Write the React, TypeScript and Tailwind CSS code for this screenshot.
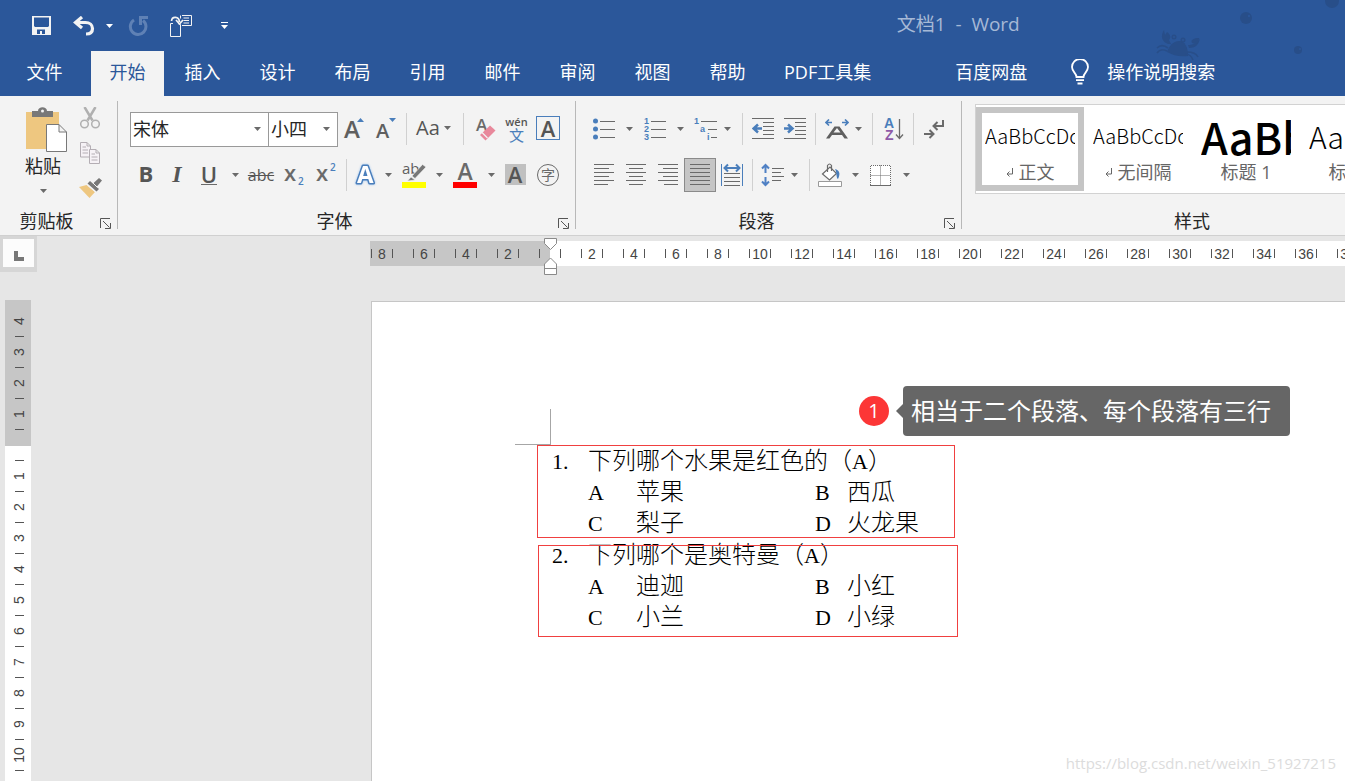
import type { ReactNode } from "react";

const GREY = "#6a6a6a";
const BLUE = "#4a7ebb";

function Caret({ className = "fill-[#6a6a6a]" }: { className?: string }) {
  return (
    <svg width="7" height="4" viewBox="0 0 7 4" className={className} aria-hidden="true">
      <path d="M0 0h7L3.5 4z" />
    </svg>
  );
}

function Tool({ label, className, children }: { label: string; className: string; children: ReactNode }) {
  return (
    <button
      type="button"
      aria-label={label}
      className={`flex h-[34px] shrink-0 items-center justify-center text-[#555555] ${className}`}
    >
      {children}
    </button>
  );
}

function Drop({ label, className }: { label: string; className: string }) {
  return (
    <Tool label={label} className={className}>
      <Caret />
    </Tool>
  );
}

function Divider({ className }: { className: string }) {
  return (
    <div className={`flex h-8 shrink-0 justify-center ${className}`}>
      <div className="w-px bg-[#d0d0d0]" />
    </div>
  );
}

function Group({ name, launcher = true, className, children }: { name: string; launcher?: boolean; className: string; children: ReactNode }) {
  return (
    <section aria-label={name} className={`flex shrink-0 flex-col ${className}`}>
      <div className="h-[111px]">{children}</div>
      <div className="flex h-7 items-center">
        <h2 className="flex-1 text-center text-lg leading-6 text-[#262626]">{name}</h2>
        {launcher && (
          <button type="button" aria-label={`${name} 设置`} className="flex w-6 justify-center pt-1">
            <svg width="11" height="11" viewBox="0 0 11 11" fill="none" stroke="#555" aria-hidden="true">
              <path d="M.5 10V.5H10M3 3l6.5 6.5M10.5 5v5.500H5" />
            </svg>
          </button>
        )}
      </div>
    </section>
  );
}

function GroupLine() {
  return <div className="mt-[5px] h-32 w-px shrink-0 bg-[#b8b8b8]" />;
}

function Lines({ rows }: { rows: [number, number][] }) {
  return (
    <svg width="22" height="22" viewBox="0 0 22 22" stroke={GREY} fill="none" aria-hidden="true">
      {rows.map(([a, b], i) => (
        <path key={i} d={`M${a} ${i * 4 + 0.5}H${b}`} />
      ))}
    </svg>
  );
}

function Crab() {
  return (
    <svg className="pointer-events-none absolute right-0 top-0" width="200" height="70" viewBox="0 0 200 70" fill="#284e89" aria-hidden="true">
      <circle cx="101" cy="18" r="6" />
      <circle cx="153" cy="50" r="4" />
      <circle cx="187" cy="1" r="7" />
      <circle cx="104" cy="16" r="1.200" fill="#2b579a" />
      <circle cx="155" cy="49" r="1" fill="#2b579a" />
      <path d="M22 52c2-6 6-11 12-11s9 6 9 15c-8 1-15-.5-21-4z" />
      <path d="M23 44c-6-2-8-8-4-14l1 5 2-3c4 3 4 6 2 8l2 4zM43 45c5 0 10-2 12-7-1 7-5 10-11 10z" />
      <path d="M47 43c-2-3 2-5 7-5 0 5-3 7-7 5z" />
      <circle cx="29" cy="37" r="2.500" />
      <circle cx="38" cy="40" r="2.500" />
      <path d="M23 48c-4-3-8-3-11 0M22 51c-4-2-8-1-10 2M42 52c5 0 9 1 11 5M40 54c4 0 7 3 8 6" fill="none" stroke="#284e89" strokeWidth="1.600" />
      <circle cx="29" cy="37" r="1" fill="#2b579a" />
      <circle cx="38" cy="40" r="1" fill="#2b579a" />
    </svg>
  );
}

function TitleBar() {
  return (
    <div className="grid h-[51px] grid-cols-[2fr_1fr] items-center">
      <div className="flex items-center pl-6">
        <button type="button" aria-label="保存" className="flex w-[34px] justify-center">
          <svg width="19" height="19" viewBox="0 0 19 19" aria-hidden="true">
            <path fill="#f3f3f3" fillRule="evenodd" d="M0 0h19v19H0zM2 1.500v8.500l1 1h13l1-1V1.500zM5 13.500v4.500h3V15h2v3h3v-4.500z" />
          </svg>
        </button>
        <button type="button" aria-label="撤消" className="ml-2 flex w-9 justify-center">
          <svg width="22" height="20" viewBox="0 0 22 20" fill="none" stroke="#f3f3f3" strokeWidth="3.200" aria-hidden="true">
            <path d="M9 1 2.500 6.500 9 12" />
            <path d="M3 6.500h9.500c4 0 7 2.500 7 6s-2.500 5.500-6.500 5.500" />
          </svg>
        </button>
        <button type="button" aria-label="撤消列表" className="flex w-3.5 justify-center">
          <Caret className="fill-white" />
        </button>
        <button type="button" aria-label="重复" className="ml-2 flex w-7 justify-center">
          <svg width="20" height="20" viewBox="0 0 20 20" fill="none" stroke="#5f81b5" strokeWidth="3" aria-hidden="true">
            <path d="M6 4A7.800 7.800 0 1 0 15 4.500" />
            <path d="M20 1.500h-7.500V9" />
          </svg>
        </button>
        <button type="button" aria-label="触摸模式" className="ml-3 flex w-[34px] justify-center">
          <svg width="22" height="22" viewBox="0 0 22 22" fill="none" stroke="#f3f3f3" aria-hidden="true">
            <path d="M3 8.500H.5v13h10v-12L8 8.500M12 .5h9.500v10H12M10.500.5v3M13.500 3H19M13.500 5.500H19M13.500 8H19" />
            <path d="M1.500 6C2 1 9 1 9.500 7M6 5l3.500 4L13 5" strokeWidth="1.700" />
          </svg>
        </button>
        <button type="button" aria-label="自定义快速访问工具栏" className="ml-3 flex w-7 flex-col items-center gap-0.5">
          <span className="h-px w-[7px] bg-white" />
          <Caret className="fill-white" />
        </button>
      </div>
      <h1 className="-mt-1 whitespace-pre text-[19px] leading-6 text-[#a6b9d6]">文档1  -  Word</h1>
    </div>
  );
}

const TABS = ["开始", "插入", "设计", "布局", "引用", "邮件", "审阅", "视图", "帮助"];

function TabBar() {
  return (
    <nav className="flex h-[45px] gap-0.5 whitespace-nowrap text-lg text-white">
      <button type="button" className="w-[89px] shrink-0 pb-1">文件</button>
      {TABS.map((t, i) => (
        <button key={t} type="button" className={`w-[73px] shrink-0 pb-1 ${i === 0 ? "bg-[#f3f3f3] text-[#2b579a]" : ""}`}>
          {t}
        </button>
      ))}
      <button type="button" className="shrink-0 px-[18px] pb-1">PDF工具集</button>
      <button type="button" className="ml-[46px] shrink-0 px-[18px] pb-1">百度网盘</button>
      <button type="button" className="ml-6 flex shrink-0 items-center gap-[18px] pb-1">
        <svg width="18" height="26" viewBox="0 0 18 26" fill="none" stroke="#fff" strokeWidth="1.800" aria-hidden="true">
          <path d="M5.500 18c0-4-4.500-5-4.500-10a8 8 0 0 1 16 0c0 5-4.500 6-4.500 10zM5 21.200h8M6.500 24.500h5" />
        </svg>
        操作说明搜索
      </button>
    </nav>
  );
}

function ClipboardGroup() {
  return (
    <Group name="剪贴板" className="w-[117px]">
      <div className="flex pl-3">
        <button type="button" className="flex w-[62px] flex-col items-center pt-[11px]">
          <svg width="48" height="46" viewBox="0 0 48 46" aria-hidden="true">
            <path fill="#eec780" d="M7 5h33v37H7z" />
            <path fill="#787878" d="M13 10V4h6c0-5 9-5 9 0h6v6z" />
            <circle cx="23.500" cy="4" r="1.500" fill="#f3f3f3" />
            <path fill="#fff" stroke="#787878" d="M27.500 17.500H40l7.500 7.500v19.500h-20zM40 17.500V25h7.500" />
          </svg>
          <span className="text-lg leading-[26px] text-[#262626]">粘贴</span>
          <span className="pt-[10px]"><Caret /></span>
        </button>
        <div className="flex w-8 flex-col pt-1">
          <button type="button" aria-label="剪切" className="flex h-[35px] items-center justify-center">
            <svg width="20" height="22" viewBox="0 0 20 22" fill="none" stroke="#b0b0b0" aria-hidden="true">
              <path d="M4.500 0l8 13.500M15.500 0l-8 13.500" strokeWidth="2.500" />
              <circle cx="4.500" cy="17" r="3.800" strokeWidth="1.500" />
              <circle cx="15.500" cy="17" r="3.800" strokeWidth="1.500" />
            </svg>
          </button>
          <button type="button" aria-label="复制" className="flex h-[35px] items-center justify-center">
            <svg width="20" height="22" viewBox="0 0 20 22" fill="#f6f2f6" stroke="#b4aeb4" aria-hidden="true">
              <path d="M.5.5H7L10.500 4v11H.5zM7 .5V4h3.500M2.500 5H6M2.500 8H8M2.500 11H8" />
              <path d="M9.500 7.500H16l3.500 3.500v10.500h-10zM16 7.500V11h3.500M11.500 12H15M11.500 15H17.500M11.500 18H17.500" />
            </svg>
          </button>
          <button type="button" aria-label="格式刷" className="flex h-[35px] items-center justify-center">
            <svg width="23" height="20" viewBox="0 0 23 20" aria-hidden="true">
              <path fill="#eec780" d="M0 9l7.500-2L16 14l-5.500 6z" />
              <path fill="#787878" d="M8.500 5.500L11 3l9 8-2.500 2.500zM14 5.500L20 0l3 2.500L17.500 9z" />
              <path stroke="#f3f3f3" d="M9 7.500l8 7M14 5l4.500 4.500" />
            </svg>
          </button>
        </div>
      </div>
    </Group>
  );
}

function Picker({ label, value, options, className }: { label: string; value: string; options: string[]; className: string }) {
  return (
    <label className={`relative flex h-[35px] shrink-0 items-center border border-[#999999] bg-white ${className}`}>
      <select aria-label={label} defaultValue={value} className="h-full w-full appearance-none bg-transparent pl-0.5 text-lg text-[#262626]">
        {options.map((o) => (
          <option key={o}>{o}</option>
        ))}
      </select>
      <span className="pointer-events-none absolute right-[7px]"><Caret /></span>
    </label>
  );
}

function FontGroup() {
  return (
    <Group name="字体" className="w-[457px]">
      <div className="pl-3 pt-[10px]">
        <div className="flex h-[46px] items-center">
          <Picker label="字体名称" value="宋体" options={["宋体", "黑体", "楷体"]} className="w-[139px]" />
          <Picker label="字号" value="小四" options={["小四", "四号", "五号"]} className="-ml-px w-[70px]" />
          <Tool label="增大字号" className="w-8">
            <svg className="overflow-visible" width="20" height="24" viewBox="0 0 20 24" aria-hidden="true">
              <text x="0" y="21" fontSize="24" fontWeight="600" fill="#5f5f5f">A</text>
              <path d="M13 5l3.500-4L20 5z" fill={BLUE} />
            </svg>
          </Tool>
          <Tool label="减小字号" className="w-8">
            <svg className="overflow-visible" width="20" height="24" viewBox="0 0 20 24" aria-hidden="true">
              <text x="0" y="21" fontSize="20" fontWeight="600" fill="#5f5f5f">A</text>
              <path d="M13 1l3.500 4L20 1z" fill={BLUE} />
            </svg>
          </Tool>
          <Divider className="w-[9px]" />
          <Tool label="更改大小写" className="w-[45px] gap-1 pb-0.5 text-xl">
            <span>Aa</span>
            <Caret />
          </Tool>
          <Divider className="w-3.5" />
          <Tool label="清除格式" className="w-[31px]">
            <svg className="overflow-visible" width="20" height="24" viewBox="0 0 20 24" aria-hidden="true">
              <text x="0" y="14" fontSize="17" fontWeight="600" fill={GREY}>A</text>
              <path d="M4 18L14 8.500l5.500 5L9.500 23.500z" fill="#e8889b" />
              <path d="M6 15.500l5.500 5.500" stroke="#f3f3f3" strokeWidth="1.200" />
            </svg>
          </Tool>
          <Tool label="拼音指南" className="w-[31px] flex-col">
            <span className="text-[11px] font-semibold leading-[11px]">wén</span>
            <span className="text-[15px] leading-4 text-[#4a7ebb]">文</span>
          </Tool>
          <Tool label="字符边框" className="w-8 pb-0.5">
            <span className="flex size-6 items-center justify-center border border-[#4a7ebb] text-[22px] font-semibold leading-5">A</span>
          </Tool>
        </div>
        <div className="flex h-[46px] items-center">
          <Tool label="加粗" className="w-8 pb-1 text-[22px] font-bold">B</Tool>
          <Tool label="倾斜" className="w-[30px] pb-0.5 font-['Liberation_Serif',serif] text-2xl font-bold italic">I</Tool>
          <Tool label="下划线" className="w-[34px] pb-0.5">
            <span className="border-b border-[#6a6a6a] text-[22px] font-semibold leading-5">U</span>
          </Tool>
          <Drop label="下划线样式" className="w-[18px]" />
          <Tool label="删除线" className="w-[34px]">
            <span className="text-base line-through">abc</span>
          </Tool>
          <Tool label="下标" className="w-8">
            <svg className="overflow-visible" width="20" height="24" viewBox="0 0 20 24" aria-hidden="true">
              <text x="0" y="18" fontSize="22" fontWeight="600" fill={GREY}>x</text>
              <text x="14" y="22" fontSize="10" fontWeight="600" fill={BLUE}>2</text>
            </svg>
          </Tool>
          <Tool label="上标" className="w-8">
            <svg className="overflow-visible" width="20" height="24" viewBox="0 0 20 24" aria-hidden="true">
              <text x="0" y="18" fontSize="22" fontWeight="600" fill={GREY}>x</text>
              <text x="14" y="8" fontSize="10" fontWeight="600" fill={BLUE}>2</text>
            </svg>
          </Tool>
          <Divider className="w-2" />
          <Tool label="文本效果" className="w-[30px]">
            <svg className="overflow-visible" width="20" height="24" viewBox="0 0 20 24" aria-hidden="true">
              <g fontSize="24" fontWeight="700" strokeLinejoin="round">
                <text x="2" y="20" fill="#fff" stroke={BLUE} strokeWidth="3" paintOrder="stroke" className="drop-shadow-[0_0_1px_#9cc3ee]">A</text>
              </g>
            </svg>
          </Tool>
          <Drop label="文本效果列表" className="w-4" />
          <Tool label="突出显示" className="w-9">
            <svg className="overflow-visible" width="24" height="26" viewBox="0 0 24 26" aria-hidden="true">
              <text x="0" y="12" fontSize="15" fontWeight="500" fill="#5f5f5f">ab</text>
              <path d="M10 14L20.500 2.500 24 5 13 16.500zM9 15l4 3-7.500 1z" fill="#777" stroke="#f3f3f3" strokeWidth=".6" />
              <path fill="#ff0" d="M0 20h24v6H0z" />
            </svg>
          </Tool>
          <Drop label="突出显示颜色" className="w-3.5" />
          <Tool label="字体颜色" className="w-[38px]">
            <svg className="overflow-visible" width="24" height="26" viewBox="0 0 24 26" aria-hidden="true">
              <text x="12" y="18" textAnchor="middle" fontSize="23" fontWeight="600" fill={GREY}>A</text>
              <path fill="#f00" d="M0 20h24v6H0z" />
            </svg>
          </Tool>
          <Drop label="字体颜色列表" className="w-3.5" />
          <Tool label="字符底纹" className="w-[34px] pb-0.5">
            <span className="flex h-[21px] w-[21px] items-center justify-center bg-[#c0c0c0] text-[22px] font-semibold leading-5">A</span>
          </Tool>
          <Tool label="带圈字符" className="w-8">
            <span className="flex size-[22px] items-center justify-center rounded-full border border-[#6a6a6a] text-sm leading-5 text-[#6a6a6a]">字</span>
          </Tool>
        </div>
      </div>
    </Group>
  );
}

function ParagraphGroup() {
  return (
    <Group name="段落" className="w-[385px]">
      <div className="pl-3 pt-[10px]">
        <div className="flex h-[46px] items-center">
          <Tool label="项目符号" className="w-8">
            <svg width="22" height="22" viewBox="0 0 22 22" stroke={GREY} aria-hidden="true">
              <path d="M7 3.500h15M7 11.500h15M7 19.500h15" />
              <g fill={BLUE} stroke="none">
                <circle cx="2.500" cy="3" r="2.500" />
                <circle cx="2.500" cy="11" r="2.500" />
                <circle cx="2.500" cy="19" r="2.500" />
              </g>
            </svg>
          </Tool>
          <Drop label="项目符号库" className="w-[19px]" />
          <Tool label="编号" className="w-8">
            <svg className="overflow-visible font-['Liberation_Sans',sans-serif]" width="22" height="24" viewBox="0 0 22 24" stroke={GREY} aria-hidden="true">
              <path d="M7 4.500h15M7 12.500h15M7 20.500h15" />
              <g fill={BLUE} stroke="none" fontSize="9" fontWeight="700">
                <text x="0" y="7">1</text>
                <text x="0" y="15">2</text>
                <text x="0" y="23">3</text>
              </g>
            </svg>
          </Tool>
          <Drop label="编号库" className="w-[18px]" />
          <Tool label="多级列表" className="w-[33px]">
            <svg className="overflow-visible font-['Liberation_Sans',sans-serif]" width="24" height="24" viewBox="0 0 24 24" stroke={GREY} aria-hidden="true">
              <path d="M7 4.500h16M14 12.500h9M17 20.500h6" />
              <g fill={BLUE} stroke="none" fontSize="9" fontWeight="700">
                <text x="0" y="7">1</text>
                <text x="6" y="15">a</text>
                <text x="13" y="23">i</text>
              </g>
            </svg>
          </Tool>
          <Drop label="多级列表库" className="w-[11px]" />
          <Divider className="w-[18px]" />
          <Tool label="减少缩进量" className="w-6">
            <svg width="22" height="22" viewBox="0 0 22 22" stroke={GREY} fill="none" aria-hidden="true">
              <path d="M0 .5h22M11 4.500h11M11 8.500h11M11 12.500h11M11 16.500h11M0 20.500h22" />
              <path d="M10 10.500H1.500M6 6.500l-4.500 4 4.500 4" stroke={BLUE} strokeWidth="2.500" />
            </svg>
          </Tool>
          <Tool label="增加缩进量" className="ml-1 w-8">
            <svg width="22" height="22" viewBox="0 0 22 22" stroke={GREY} fill="none" aria-hidden="true">
              <path d="M0 .5h22M11 4.500h11M11 8.500h11M11 12.500h11M11 16.500h11M0 20.500h22" />
              <path d="M0 10.500h8M4 6.500l4.500 4-4.500 4" stroke={BLUE} strokeWidth="2.500" />
            </svg>
          </Tool>
          <Divider className="w-[9px]" />
          <Tool label="中文版式" className="w-[34px]">
            <svg width="24" height="20" viewBox="0 0 24 20" fill="none" aria-hidden="true">
              <path d="M1 19.500L9.500 7.500h5L23 19.500h-3.500l-2.500-3.500H7l-2.500 3.500zM8.500 13.500h7L12 9z" fill="#5f5f5f" fillRule="evenodd" />
              <path d="M1 3.500h6M4 .5l-3 3 3 3M17 3.500h6M20 .5l3 3-3 3" stroke={BLUE} strokeWidth="1.600" />
            </svg>
          </Tool>
          <Drop label="中文版式列表" className="w-2" />
          <Divider className="w-5" />
          <Tool label="排序" className="w-6">
            <svg className="overflow-visible font-['Liberation_Sans',sans-serif]" width="20" height="24" viewBox="0 0 20 24" fill="none" aria-hidden="true">
              <text x="0" y="11" fontSize="14" fontWeight="700" fill={BLUE}>A</text>
              <text x="1" y="23" fontSize="14" fontWeight="700" fill="#8e5aa8">Z</text>
              <path d="M15.500 2v19M12 17.500l3.500 4 3.500-4" stroke={GREY} strokeWidth="1.300" />
            </svg>
          </Tool>
          <Divider className="w-3.5" />
          <Tool label="显示编辑标记" className="w-7">
            <svg width="20" height="20" viewBox="0 0 20 20" fill="none" stroke={GREY} strokeWidth="2" aria-hidden="true">
              <path d="M19 1v6h-9M13.500 3L9.500 7l4 4M0 15h9M5.500 11l4 4-4 4" />
            </svg>
          </Tool>
        </div>
        <div className="flex h-[46px] items-center">
          <Tool label="左对齐" className="w-8">
            <Lines rows={[[1, 21], [1, 16], [1, 21], [1, 16], [1, 21], [1, 15]]} />
          </Tool>
          <Tool label="居中" className="w-8">
            <Lines rows={[[1, 21], [4, 18], [1, 21], [4, 18], [1, 21], [4, 18]]} />
          </Tool>
          <Tool label="右对齐" className="w-8">
            <Lines rows={[[1, 21], [6, 21], [1, 21], [6, 21], [1, 21], [7, 21]]} />
          </Tool>
          <Tool label="两端对齐" className="w-8 border border-[#8a8a8a] bg-[#c5c5c5]">
            <Lines rows={[[1, 21], [1, 21], [1, 21], [1, 21], [1, 21], [1, 21]]} />
          </Tool>
          <Tool label="分散对齐" className="w-8">
            <svg width="22" height="24" viewBox="0 0 22 24" fill="none" stroke={GREY} aria-hidden="true">
              <path d="M3 10.500h16M3 14.500h16M3 18.500h16M3 22.500h16" />
              <path d="M.5 1v22M21.500 1v22" stroke={BLUE} />
              <path d="M3.500 5h15M7 1.500L3.500 5 7 8.500M15 1.500L18.500 5 15 8.500" stroke={BLUE} strokeWidth="2" />
            </svg>
          </Tool>
          <Divider className="w-[9px]" />
          <Tool label="行距" className="w-8">
            <svg width="24" height="24" viewBox="0 0 24 24" fill="none" stroke={GREY} aria-hidden="true">
              <path d="M11 5.500h12M11 9.500h9M11 13.500h12M11 17.500h9" />
              <path d="M4.500 2v8M1 5.500L4.500 2 8 5.500M4.500 14v8M1 18.500L4.500 22 8 18.500" stroke="#4f80c4" strokeWidth="2" />
            </svg>
          </Tool>
          <Drop label="行距列表" className="w-[11px]" />
          <Divider className="w-[18px]" />
          <Tool label="底纹" className="w-6">
            <svg width="24" height="24" viewBox="0 0 24 24" fill="#fff" stroke={GREY} aria-hidden="true">
              <path d="M4.500 11L12 4l6.500 6.500-7 6.500z" strokeWidth="1.200" />
              <path d="M9.500 9V2.500q2-3 4 0V8" fill="none" strokeWidth="1.200" />
              <path d="M17 6c4 1 6 4 3 10-2-1-1-7-3-10z" fill={BLUE} stroke="none" />
              <path d="M.5 18.500h23v5H.5z" stroke="#999" />
            </svg>
          </Tool>
          <Drop label="底纹颜色" className="w-[26px]" />
          <Tool label="边框" className="w-[25px]">
            <svg width="21" height="21" viewBox="0 0 21 21" fill="#fff" stroke={GREY} aria-hidden="true">
              <path d="M.5 20V.5h20V20M.5 10.500h20M10.500.5V20" strokeDasharray="1 1" />
              <path d="M0 20.500h21" />
            </svg>
          </Tool>
          <Drop label="边框列表" className="w-[26px]" />
        </div>
      </div>
    </Group>
  );
}

const STYLES = [
  { name: "正文", sample: "AaBbCcDc", look: "text-xl font-light", mark: true },
  { name: "无间隔", sample: "AaBbCcDc", look: "text-xl font-light", mark: true },
  { name: "标题 1", sample: "AaBb", look: "text-[43px] font-medium", mark: false },
  { name: "标题 2", sample: "AaBbC", look: "text-[30px] font-light", mark: false },
];

function StylesGroup() {
  return (
    <Group name="样式" launcher={false} className="w-[460px]">
      <div className="pl-[13px] pt-2">
        <div className="flex h-[90px] items-center border border-[#d2d2d2] bg-white">
          {STYLES.map((s, i) => (
            <button
              key={s.name}
              type="button"
              className={`flex h-[84px] w-[108px] shrink-0 flex-col border-[6px] px-[3px] ${i === 0 ? "border-[#c5c5c5]" : "border-transparent"}`}
            >
              <span className={`flex h-[46px] w-full items-center overflow-hidden font-['Noto_Sans_CJK_SC',sans-serif] leading-[46px] text-black ${s.look}`}>
                {s.sample}
              </span>
              <span className="flex w-full items-center justify-center gap-1.5 whitespace-nowrap text-lg leading-[26px] text-[#666666]">
                {s.mark && (
                  <svg width="7" height="9" viewBox="0 0 7 9" fill="none" stroke="#666" aria-hidden="true">
                    <path d="M6.500 0v6H1M3.500 3.500L1 6l2.500 2.500" />
                  </svg>
                )}
                {s.name}
              </span>
            </button>
          ))}
        </div>
      </div>
    </Group>
  );
}

const H_MARKS = ["8", "6", "4", "2", "", "2", "4", "6", "8", "10", "12", "14", "16", "18", "20", "22", "24", "26", "28", "30", "32", "34", "36", "38", "40"];
const V_MARKS = ["4", "3", "2", "1", "", "1", "2", "3", "4", "5", "6", "7", "8", "9", "10"];

function HorizontalRuler() {
  return (
    <div className="relative min-w-0 flex-1 pt-[5px]">
      <div className="flex h-[25px] items-center overflow-hidden bg-[linear-gradient(to_right,#c6c6c6_180px,#ffffff_180px)] pl-px font-['Liberation_Sans',sans-serif] text-sm text-[#444444]">
        {H_MARKS.map((m, i) => (
          <div key={i} className="mr-5 flex shrink-0 items-center">
            <span className="h-[9px] w-px bg-[#555555]" />
            <span className="w-5 text-center leading-4">{m}</span>
            <span className="h-[9px] w-px bg-[#555555]" />
          </div>
        ))}
      </div>
      <svg className="absolute left-[174px] top-0.5" width="13" height="37" viewBox="0 0 13 37" fill="#fff" stroke="#8a8a8a" aria-hidden="true">
        <path d="M.5.500h12v5l-6 6-6-6zM.5 36.500v-10.500l6-6 6 6v10.500zM.5 30.500h12" />
      </svg>
    </div>
  );
}

function VerticalRuler() {
  return (
    <div className="ml-[5px] w-[26px] self-stretch overflow-hidden bg-[linear-gradient(to_bottom,#c6c6c6_146px,#ffffff_146px)] pt-1.5 font-['Liberation_Sans',sans-serif] text-sm text-[#444444]">
      {V_MARKS.map((m, i) => (
        <div key={i} className="flex h-[31px] flex-col items-center pl-0.5">
          <span className="flex h-[30px] -rotate-90 items-center leading-none">{m}</span>
          <span className="h-px w-[9px] bg-[#555555]" />
        </div>
      ))}
    </div>
  );
}

const QUESTIONS = [
  { no: "1.", title: "下列哪个水果是红色的", answer: "A", options: [["A", "苹果"], ["B", "西瓜"], ["C", "梨子"], ["D", "火龙果"]] },
  { no: "2.", title: "下列哪个是奥特曼", answer: "A", options: [["A", "迪迦"], ["B", "小红"], ["C", "小兰"], ["D", "小绿"]] },
];

function Letter({ children }: { children: ReactNode }) {
  return <span className="font-['Liberation_Serif',serif] text-[22px] font-normal">{children}</span>;
}

function Page() {
  return (
    <main className="relative mt-px min-w-0 flex-1 overflow-hidden border-l border-t border-[#c6c6c6] bg-white">
      <div className="ml-[143px] mt-[107px] h-9 w-9 border-b border-r border-[#a6a6a6]" />
      <ol className="-mt-0.5 ml-[180px] flex flex-col gap-px font-['Noto_Sans_CJK_SC',sans-serif] text-2xl font-light leading-[31px] text-black">
        {QUESTIONS.map((q) => (
          <li key={q.no} className="flex">
            <span className="w-9 shrink-0"><Letter>{q.no}</Letter></span>
            <div>
              <p className="h-[31px]">{q.title}（<Letter>{q.answer}</Letter>）</p>
              <div className="grid grid-cols-[48px_179px_32px_auto]">
                {q.options.flatMap(([k, v]) => [
                  <span key={k} className="h-[31px]"><Letter>{k}</Letter></span>,
                  <span key={k + v} className="h-[31px]">{v}</span>,
                ])}
              </div>
            </div>
          </li>
        ))}
      </ol>
      <div className="absolute left-[165px] top-[143px] h-[93px] w-[418px] border border-[#f04040]" />
      <div className="absolute left-[166px] top-[243px] h-[92px] w-[420px] border border-[#f04040]" />
      <div className="absolute left-[487px] top-[84px] flex items-center text-white">
        <span className="flex size-[30px] items-center justify-center rounded-full bg-[#fc3636] text-xl leading-none">1</span>
        <svg className="ml-[7px]" width="7" height="14" viewBox="0 0 7 14" fill="#666" aria-hidden="true">
          <path d="M7 0v14L0 7z" />
        </svg>
        <p className="h-[50px] whitespace-nowrap rounded bg-[#666666] pl-2 pr-[19px] text-2xl leading-[50px]">相当于二个段落、每个段落有三行</p>
      </div>
      <p className="absolute bottom-1.5 right-[9px] text-[15px] leading-6 text-[#dcdcdc]">https://blog.csdn.net/weixin_51927215</p>
    </main>
  );
}

export default function App() {
  return (
    <div className="flex h-screen flex-col overflow-hidden bg-[#e6e6e6] font-['Open_Sans','Noto_Sans_CJK_SC',sans-serif]">
      <header className="relative shrink-0 bg-[#2b579a]">
        <Crab />
        <TitleBar />
        <TabBar />
      </header>
      <div className="flex shrink-0 overflow-hidden border-b border-[#d0d0d0] bg-[#f3f3f3]">
        <ClipboardGroup />
        <GroupLine />
        <FontGroup />
        <GroupLine />
        <ParagraphGroup />
        <GroupLine />
        <StylesGroup />
      </div>
      <div className="flex h-16 shrink-0 items-start">
        <div className="mr-[333px] bg-[#d6d6d6] p-[3px] pb-[5px]">
          <button type="button" aria-label="制表符" className="flex h-7 w-[31px] items-center justify-center bg-[#fcfcfc] pt-1.5">
            <svg width="10" height="10" viewBox="0 0 10 10" fill="#777" aria-hidden="true">
              <path d="M0 0h4v6h6v4H0z" />
            </svg>
          </button>
        </div>
        <HorizontalRuler />
      </div>
      <div className="flex min-h-0 flex-1">
        <VerticalRuler />
        <div className="w-[340px] shrink-0" />
        <Page />
      </div>
    </div>
  );
}
